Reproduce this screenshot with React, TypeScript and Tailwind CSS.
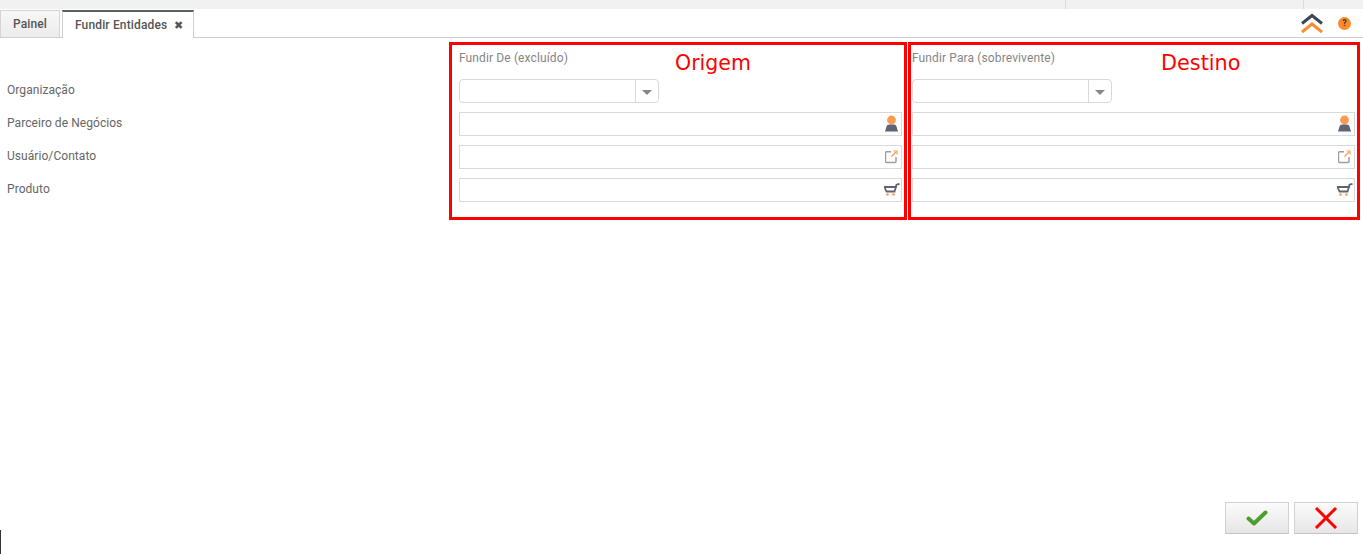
const Person = () => (
  <svg width="16" height="18" viewBox="0.5 0 16 18" className="block">
    <circle cx="8" cy="5" r="4.4" fill="#fb9a4b" />
    <path d="M1.5 16.5 L3 11.5 Q3.6 9.8 5.5 9.6 L10.5 9.6 Q12.4 9.8 13 11.5 L14.5 16.5 Z" fill="#5e6472" />
  </svg>
);
const External = () => (
  <svg width="14" height="14" viewBox="1 1 14 14" fill="none" className="block">
    <path d="M7 2.8H2.5a1 1 0 0 0-1 1V12.5a1 1 0 0 0 1 1H11a1 1 0 0 0 1-1V8" stroke="#9a9ea6" strokeWidth="1.5" />
    <path d="M7.5 7.5 12 3" stroke="#fb9a4b" strokeWidth="1.3" />
    <path d="M9.5 2h3.5v3.5" fill="none" stroke="#fb9a4b" strokeWidth="1.2" />
  </svg>
);
const Cart = () => (
  <svg width="17" height="14" viewBox="1 0.5 17 14" fill="none" className="block">
    <path d="M1.5 4.5H13L11.5 9H3.5Z" stroke="#5e6472" strokeWidth="1.8" />
    <path d="M12.5 5 13.5 2.2 16.5 1.3" stroke="#5e6472" strokeWidth="1.8" />
    <circle cx="4.5" cy="12" r="1.3" fill="#fb9a4b" />
    <circle cx="10.5" cy="12" r="1.3" fill="#fb9a4b" />
  </svg>
);

const Select = () => (
  <div className="flex h-6 w-[200px] rounded-sm border border-[#d9d9d9] bg-white">
    <div className="flex-1 border-r border-[#d9d9d9]" />
    <div className="flex w-[22px] items-center justify-center">
      <div className="mt-0.5 h-0 w-0 border-x-[5px] border-t-[5px] border-x-transparent border-t-[#85878a]" />
    </div>
  </div>
);

const Field = ({ icon }: { icon: React.ReactNode }) => (
  <div className="flex h-6 items-center justify-end border border-[#d9d9d9] bg-white">
    <div className="flex w-[18px] items-center justify-center">{icon}</div>
  </div>
);

const Column = ({ title, className }: { title: string; className: string }) => (
  <div className={className}>
    <div className="h-[41px] pt-[12px] text-xs leading-4 tracking-[0.01em] text-[#858585]">{title}</div>
    <div className="flex flex-col gap-[9px]">
      <Select />
      <Field icon={<Person />} />
      <Field icon={<External />} />
      <Field icon={<Cart />} />
    </div>
  </div>
);

const Frame = ({ className }: { className: string }) => (
  <div className={`absolute border-[3px] border-[#ff0000] ${className}`} />
);

export default function App() {
  return (
    <div className="relative h-[554px] w-[1363px] overflow-hidden bg-white font-['Roboto',sans-serif]">
      <div className="flex h-[9px] justify-end bg-[#f1f1f1]">
        <div className="w-[298px] border-l border-[#dcdcdc]">
          <div className="ml-[237px] h-full w-[60px] border-l border-[#dcdcdc]" />
        </div>
      </div>

      <div className="flex h-[29px] items-end border-b border-[#cfcfcf]">
        <div className="flex h-[27px] w-[60px] items-center justify-center border border-b-0 border-[#d4d4d4] bg-gradient-to-b from-[#f7f7f7] to-[#ececec] text-xs font-medium tracking-[0.01em] text-[#555]">
          Painel
        </div>
        <div className="relative top-px ml-0.5 flex h-[28px] w-[132px] items-center gap-[7px] border-x border-[#cfcfcf] border-t-2 border-t-[#5a5f66] bg-white pl-[12px] text-xs font-medium tracking-[0.012em] text-[#555]">
          Fundir Entidades
          <span className="text-[11px] leading-none text-[#555]">✖</span>
        </div>
        <div className="flex-1" />
        <div className="mb-[3px] mr-[12px] flex items-center gap-[14px]">
          <svg width="24" height="21" viewBox="0 0 24 21" fill="none" className="block">
            <path d="M2 10.5 12 2.5 22 10.5" stroke="#3d4659" strokeWidth="3" />
            <path d="M2 19 12 11 22 19" stroke="#fa8e2e" strokeWidth="3" />
          </svg>
          <div className="flex h-[13px] w-[13px] items-center justify-center rounded-full bg-[#fa8a2a] text-[9px] font-bold leading-none text-[#4a3a2a]">
            ?
          </div>
        </div>
      </div>

      <div className="flex">
        <div className="w-[459px] pl-[7px] pt-[35px] text-xs tracking-[0.005em] text-[#666]">
          <div className="flex h-[33px] items-center">Organização</div>
          <div className="flex h-[33px] items-center">Parceiro de Negócios</div>
          <div className="flex h-[33px] items-center">Usuário/Contato</div>
          <div className="flex h-[33px] items-center">Produto</div>
        </div>
        <Column title="Fundir De (excluído)" className="w-[443px]" />
        <Column title="Fundir Para (sobrevivente)" className="ml-[10px] w-[443px]" />
      </div>

      <Frame className="left-[449px] top-[42px] h-[178px] w-[458px]" />
      <Frame className="left-[908px] top-[42px] h-[178px] w-[452px]" />
      <div className="absolute left-[675px] top-[51px] font-['DejaVu_Sans',sans-serif] text-[20.5px] leading-6 text-[#ff0000]">Origem</div>
      <div className="absolute left-[1161px] top-[51px] font-['DejaVu_Sans',sans-serif] text-[20.8px] leading-6 text-[#ff0000]">Destino</div>

      <div className="absolute bottom-[20px] right-[5px] flex gap-[5px]">
        <button className="flex h-[32px] w-[64px] items-center justify-center border border-[#d2d2d2] border-b-[#c4c4c4] bg-gradient-to-b from-[#fbfbfb] to-[#e6e6e6]">
          <svg width="22" height="16" viewBox="0 0 22 16" fill="none">
            <path d="M2.5 8.5 8 13.5 19.5 2.5" stroke="#4c9f2f" strokeWidth="4" strokeLinejoin="round" strokeLinecap="round" />
          </svg>
        </button>
        <button className="flex h-[32px] w-[64px] items-center justify-center border border-[#d2d2d2] border-b-[#c4c4c4] bg-gradient-to-b from-[#fbfbfb] to-[#e6e6e6]">
          <svg width="24" height="22" viewBox="0 0 24 22" fill="none">
            <path d="M2 1 22 21M22 1 2 21" stroke="#ff0000" strokeWidth="3" />
          </svg>
        </button>
      </div>
      <div className="absolute bottom-0 left-0 h-[24px] w-px bg-[#333]" />
    </div>
  );
}
